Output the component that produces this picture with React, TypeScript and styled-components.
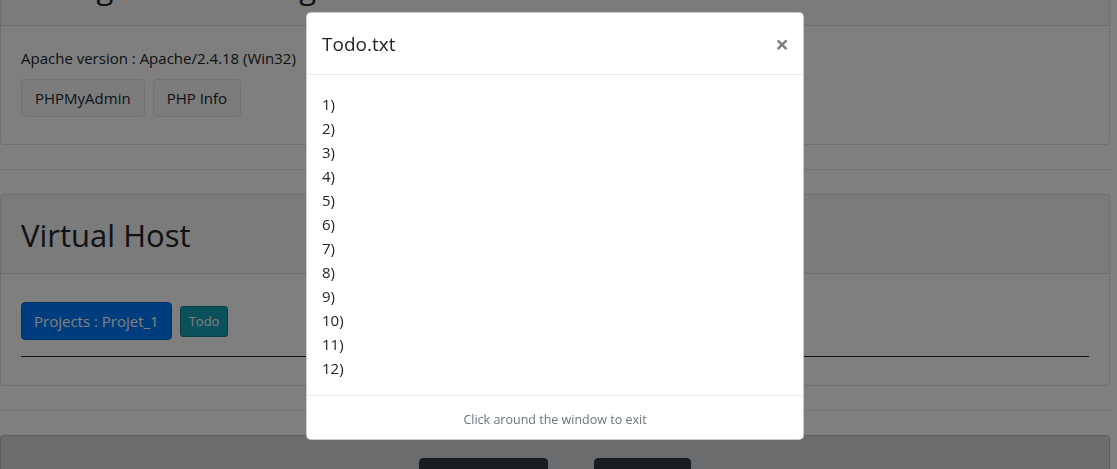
import React from "react";
import styled, { createGlobalStyle } from "styled-components";

const GlobalStyle = createGlobalStyle`
  html, body { margin: 0; padding: 0; background: #fff; overflow: hidden; }
  body {
    font-family: "Open Sans", "Noto Sans", sans-serif;
    font-size: 15px;
    line-height: 24px;
    color: #212529;
  }
  * { box-sizing: border-box; }
`;

const Page = styled.div`
  width: 1110px;
  margin-top: -54px;
`;

const Card = styled.section<{ $muted?: boolean }>`
  border: 1px solid rgba(0, 0, 0, 0.125);
  border-radius: 4px;
  background: ${(p) => (p.$muted ? "#d6d8db" : "#fff")};
  overflow: hidden;
`;

const CardHeader = styled.header`
  height: 79px;
  padding: 22px 20px 0;
  background: rgba(0, 0, 0, 0.03);
  border-bottom: 1px solid rgba(0, 0, 0, 0.125);
`;

const Title = styled.h1`
  margin: 0;
  font-size: 31px;
  font-weight: 400;
  line-height: 1.2;
`;

const CardBody = styled.div<{ $pad: string }>`
  padding: ${(p) => p.$pad};
`;

const InfoLine = styled.div`
  line-height: 24px;
`;

const ButtonRow = styled.div<{ $gap: number; $top?: number; $center?: boolean }>`
  display: flex;
  align-items: center;
  gap: ${(p) => p.$gap}px;
  margin-top: ${(p) => p.$top ?? 0}px;
  justify-content: ${(p) => (p.$center ? "center" : "flex-start")};
`;

type Variant = "light" | "primary" | "info" | "dark";

const borders: Record<Variant, string> = {
  light: "#e2e4e6",
  primary: "#0062cc",
  info: "#117a8b",
  dark: "#343a40",
};
const fills: Record<Variant, string> = {
  light: "#f8f9fa",
  primary: "#007bff",
  info: "#17a2b8",
  dark: "#343a40",
};

const Button = styled.button<{ $variant: Variant; $small?: boolean }>`
  font-family: inherit;
  font-size: ${(p) => (p.$small ? "13px" : "15px")};
  line-height: ${(p) => (p.$small ? "21px" : "24px")};
  padding: ${(p) => (p.$small ? "4px 8px" : "6px 12px")};
  border-radius: ${(p) => (p.$small ? "3px" : "4px")};
  border: 1px solid ${(p) => borders[p.$variant]};
  background: ${(p) => fills[p.$variant]};
  color: ${(p) => (p.$variant === "light" ? "#212529" : "#fff")};
`;

const LightButton = styled(Button)`
  padding: 6px 13px;
`;

const DarkButton = styled(Button)<{ $w: number }>`
  width: ${(p) => p.$w}px;
  height: 60px;
`;

const Divider = styled.hr`
  margin: 24px 0;
  border: 0;
  border-top: 1px solid rgba(0, 0, 0, 0.1);
`;

const DarkRule = styled.div`
  margin-top: 16px;
  border-top: 1px solid #23272b;
`;

const Backdrop = styled.div`
  position: fixed;
  inset: 0;
  background: rgba(0, 0, 0, 0.5);
  display: flex;
  justify-content: center;
  align-items: flex-start;
  padding: 12px 7px 0 0;
`;

const Dialog = styled.div`
  width: 498px;
  background: #fff;
  border: 1px solid rgba(0, 0, 0, 0.2);
  border-radius: 5px;
  display: flex;
  flex-direction: column;
`;

const DialogHeader = styled.div`
  display: flex;
  align-items: flex-start;
  padding: 16px 15px 15px;
  border-bottom: 1px solid #e9ecef;
`;

const DialogTitle = styled.h5`
  margin: 0;
  font-size: 19px;
  font-weight: 400;
  line-height: 30px;
`;

const Close = styled.button`
  margin: -16px -17px -16px auto;
  padding: 16px;
  background: transparent;
  border: 0;
  font-family: inherit;
  font-size: 24px;
  font-weight: 700;
  line-height: 30px;
  color: #000;
  opacity: 0.5;
`;

const DialogBody = styled.div`
  padding: 17px 15px 15px;
`;

const TodoLine = styled.div`
  line-height: 24px;
`;

const DialogFooter = styled.div`
  padding: 14px 12px 9px;
  border-top: 1px solid #e9ecef;
  text-align: center;
  font-size: 12.5px;
  line-height: 20px;
  color: #6c757d;
`;

export default function App() {
  const lines = Array.from({ length: 12 }, (_, i) => `${i + 1})`);
  return (
    <>
      <GlobalStyle />
      <Page>
        <Card>
          <CardHeader>
            <Title>Configuration du logiciel</Title>
          </CardHeader>
          <CardBody $pad="20px 20px 27px">
            <InfoLine>Apache version : Apache/2.4.18 (Win32)</InfoLine>
            <ButtonRow $gap={8} $top={9}>
              <LightButton $variant="light">PHPMyAdmin</LightButton>
              <LightButton $variant="light">PHP Info</LightButton>
            </ButtonRow>
          </CardBody>
        </Card>
        <Divider />
        <Card>
          <CardHeader>
            <Title>Virtual Host</Title>
          </CardHeader>
          <CardBody $pad="28px 20px 28px">
            <ButtonRow $gap={8}>
              <Button $variant="primary">Projects : Projet_1</Button>
              <Button $variant="info" $small>
                Todo
              </Button>
            </ButtonRow>
            <DarkRule />
          </CardBody>
        </Card>
        <Divider />
        <Card $muted>
          <CardBody $pad="22px 20px 22px">
            <ButtonRow $gap={46} $center>
              <DarkButton $variant="dark" $w={129} aria-label="Haut de page" />
              <DarkButton $variant="dark" $w={97} aria-label="Contact" />
            </ButtonRow>
          </CardBody>
        </Card>
      </Page>
      <Backdrop>
        <Dialog>
          <DialogHeader>
            <DialogTitle>Todo.txt</DialogTitle>
            <Close aria-label="Close">×</Close>
          </DialogHeader>
          <DialogBody>
            {lines.map((l) => (
              <TodoLine key={l}>{l}</TodoLine>
            ))}
          </DialogBody>
          <DialogFooter>Click around the window to exit</DialogFooter>
        </Dialog>
      </Backdrop>
    </>
  );
}
